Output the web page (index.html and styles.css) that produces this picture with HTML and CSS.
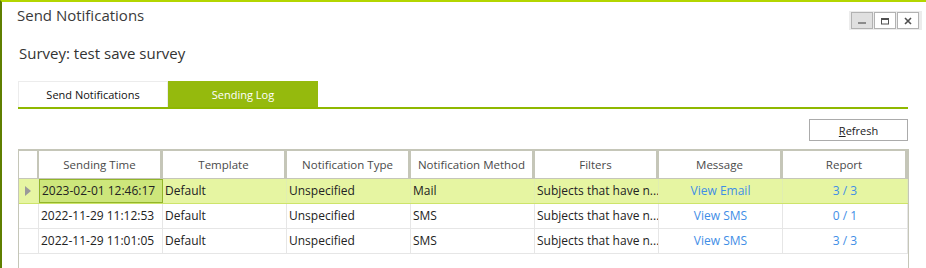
FILE: index.html
```html
<!DOCTYPE html>
<html lang="en">
<head>
  <meta charset="UTF-8">
  <title>Send Notifications</title>
  <link rel="stylesheet" href="styles.css">
</head>
<body>
  <div class="window">
    <div class="titlebar">
      <div class="title">Send Notifications</div>
      <div class="winbtns">
        <span class="winbtn min"><svg width="8" height="8" viewBox="0 0 8 8"><rect x="0" y="5" width="8" height="2" fill="#8c8c8c"/></svg></span>
        <span class="winbtn"><svg width="8" height="8" viewBox="0 0 8 8"><rect x="0.5" y="1.5" width="7" height="5.5" fill="none" stroke="#505050"/><rect x="0" y="1" width="8" height="2" fill="#505050"/></svg></span>
        <span class="winbtn"><svg width="8" height="8" viewBox="0 0 8 8"><path d="M1 1 L7 7 M7 1 L1 7" stroke="#505050" stroke-width="1.6"/></svg></span>
      </div>
    </div>
    <div class="survey">Survey: test save survey</div>
    <div class="tabs">
      <div class="tab">Send Notifications</div>
      <div class="tab active">Sending Log</div>
    </div>
    <div class="toolbar">
      <button class="btn"><u>R</u>efresh</button>
    </div>
    <div class="grid">
      <div class="row head">
        <div class="cell"></div>
        <div class="cell">Sending Time</div>
        <div class="cell">Template</div>
        <div class="cell">Notification Type</div>
        <div class="cell">Notification Method</div>
        <div class="cell">Filters</div>
        <div class="cell">Message</div>
        <div class="cell">Report</div>
      </div>
      <div class="row selected">
        <div class="cell marker"><span class="arrow"></span></div>
        <div class="cell current">2023-02-01 12:46:17</div>
        <div class="cell">Default</div>
        <div class="cell">Unspecified</div>
        <div class="cell">Mail</div>
        <div class="cell">Subjects that have n...</div>
        <div class="cell link">View Email</div>
        <div class="cell link">3 / 3</div>
      </div>
      <div class="row">
        <div class="cell marker"></div>
        <div class="cell">2022-11-29 11:12:53</div>
        <div class="cell">Default</div>
        <div class="cell">Unspecified</div>
        <div class="cell">SMS</div>
        <div class="cell">Subjects that have n...</div>
        <div class="cell link">View SMS</div>
        <div class="cell link">0 / 1</div>
      </div>
      <div class="row">
        <div class="cell marker"></div>
        <div class="cell">2022-11-29 11:01:05</div>
        <div class="cell">Default</div>
        <div class="cell">Unspecified</div>
        <div class="cell">SMS</div>
        <div class="cell">Subjects that have n...</div>
        <div class="cell link">View SMS</div>
        <div class="cell link">3 / 3</div>
      </div>
    </div>
  </div>
</body>
</html>
```

FILE: styles.css
```css
* {
  margin: 0;
  padding: 0;
  box-sizing: border-box;
}
body {
  width: 926px;
  height: 268px;
  overflow: hidden;
  background: #fff;
  font-family: "Open Sans", "Noto Sans", sans-serif;
  color: #222;
}
.window {
  height: 268px;
  border-top: 2px solid #b4d600;
  border-left: 2px solid #5f7f00;
  padding-left: 16px;
}
.titlebar {
  display: flex;
  justify-content: space-between;
  align-items: flex-start;
}
.title {
  margin-top: 2px;
  margin-left: -1px;
  font-size: 15px;
  line-height: 22px;
  color: #3a3a3a;
}
.winbtns {
  display: flex;
  gap: 1px;
  margin-top: 9px;
  margin-right: 4px;
  padding: 1px 3px 1px 2px;
  background: #ececec;
}
.winbtn {
  display: flex;
  align-items: center;
  justify-content: center;
  width: 22px;
  height: 17px;
  border: 1px solid #b2b2b2;
  background: #fff;
}
.winbtn.min {
  background: #e0e0e0;
}
.survey {
  margin-top: 12px;
  margin-left: 1px;
  font-size: 15px;
  line-height: 22px;
  color: #333;
}
.tabs {
  display: flex;
  margin-top: 17px;
  width: 890px;
  border-bottom: 2px solid #8fb800;
}
.tab {
  width: 150px;
  height: 26px;
  line-height: 26px;
  text-align: center;
  font-size: 11px;
  color: #111;
  border: 1px solid #ececec;
  border-bottom: none;
}
.tab.active {
  background: #95ba0d;
  border-color: #95ba0d;
  color: #fff;
}
.toolbar {
  display: flex;
  justify-content: flex-end;
  width: 890px;
  margin-top: 10px;
}
.btn {
  width: 99px;
  height: 22px;
  border: 1px solid #ababab;
  background: #fff;
  font-family: inherit;
  font-size: 11px;
  color: #222;
}
.grid {
  margin-top: 8px;
  width: 891px;
  height: 130px;
  border: 1px solid #c5c6b8;
  border-top-width: 2px;
}
.row {
  display: grid;
  grid-template-columns: 20px repeat(6, 124px) 125px;
  height: 25px;
  border-bottom: 1px solid #e6e6e6;
}
.cell {
  border-right: 1px solid #e6e6e6;
  font-size: 12px;
  line-height: 24px;
  padding-left: 2px;
  white-space: nowrap;
  overflow: hidden;
}
.head {
  height: 28px;
  background: #c5c6b8;
  border-bottom: none;
  padding-bottom: 1px;
}
.head .cell {
  background: #fff;
  border-right: 3px solid #c5c6b8;
  text-align: center;
  color: #4a4a4a;
  font-size: 11.5px;
  line-height: 27px;
  padding-left: 0;
}
.head .cell:first-child {
  border-right-width: 2px;
}
.selected {
  background: #e6f5a2;
  border-bottom-color: #cde46a;
}
.selected .cell {
  border-right-color: #e0eeb0;
}
.selected .current {
  background: #cde67b;
  border: 1px solid #92b52a;
  line-height: 22px;
}
.marker {
  display: flex;
  align-items: center;
  padding-left: 6px;
}
.arrow {
  width: 0;
  height: 0;
  border-top: 5px solid transparent;
  border-bottom: 5px solid transparent;
  border-left: 6px solid #9a9a9a;
}
.link {
  text-align: center;
  color: #3f8ee6;
  padding-left: 0;
}
```
